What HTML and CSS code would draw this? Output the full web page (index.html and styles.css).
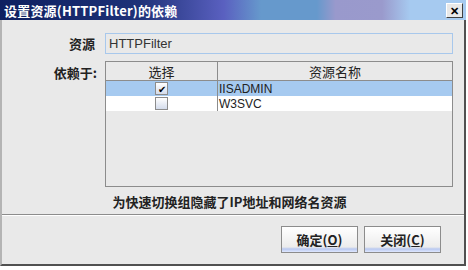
FILE: index.html
```html
<!DOCTYPE html>
<html>
<head>
    <title>设置资源的依赖</title>
    <meta charset="utf-8">
    <link rel="stylesheet" href="styles.css">
</head>
<body>
<div class="dialog">
    <div class="titlebar">
        <span class="title">设置资源(HTTPFilter)的依赖</span>
        <span class="close-btn">✕</span>
    </div>
    <div class="content">
        <div class="form-row">
            <span class="label">资源</span>
            <div class="field">HTTPFilter</div>
        </div>
        <div class="form-row top">
            <span class="label dep">依赖于:</span>
            <div class="table">
                <div class="row head">
                    <div class="cell c1">选择</div>
                    <div class="cell c2">资源名称</div>
                </div>
                <div class="row selected">
                    <div class="cell c1"><span class="check on">✔</span></div>
                    <div class="cell c2 name">IISADMIN</div>
                </div>
                <div class="row">
                    <div class="cell c1"><span class="check"></span></div>
                    <div class="cell c2 name">W3SVC</div>
                </div>
            </div>
        </div>
        <p class="note">为快速切换组隐藏了IP地址和网络名资源</p>
    </div>
    <div class="buttons">
        <button>确定(<u>O</u>)</button>
        <button>关闭(<u>C</u>)</button>
    </div>
</div>
</body>
</html>
```
FILE: styles.css
```css
body {
    margin: 0;
    background: #ffffff;
    font-family: "Noto Sans CJK SC", "Liberation Sans", sans-serif;
    font-size: 12px;
    color: #222;
}

.dialog {
    box-sizing: border-box;
    width: 466px;
    height: 266px;
    background: #e9e9e9;
    border-left: 2px solid #b4b4b4;
    border-right: 2px solid #505050;
    border-bottom: 2px solid #505050;
    display: flex;
    flex-direction: column;
}

.titlebar {
    height: 20px;
    margin-left: -2px;
    margin-right: -2px;
    display: flex;
    align-items: center;
    justify-content: space-between;
    padding: 0 3px 0 4px;
    background: linear-gradient(to right, #0e1f60 0%, #1e3278 30%, #5a60c0 48%, #6699cc 56%, #6699cc 68%, #9999cc 72%, #9a9acc 82%, #a6caf0 88%, #a6caf0 100%);
}

.title {
    color: #fff;
    font-weight: bold;
    font-size: 13px;
    letter-spacing: 0.2px;
}

.close-btn {
    width: 15px;
    height: 13px;
    background: #e8e8e8;
    border: 1px solid #fff;
    border-right-color: #404040;
    border-bottom-color: #404040;
    font-size: 11px;
    font-weight: bold;
    line-height: 13px;
    text-align: center;
    color: #000;
}

.content {
    padding: 13px 11px 0 0;
    border-bottom: 1px solid #8c8c8c;
    box-shadow: 0 1px 0 #ffffff;
}

.form-row {
    display: flex;
    align-items: center;
    gap: 10px;
}

.form-row.top {
    align-items: flex-start;
    margin-top: 7px;
}

.label {
    width: 93px;
    text-align: right;
    font-weight: bold;
    font-size: 13px;
}

.label.dep {
    width: 95px;
    margin-right: -2px;
    margin-top: 2px;
}

.field {
    flex: 1;
    height: 19px;
    border: 1px solid #a8c8ec;
    padding-left: 3px;
    font-family: "Liberation Sans", sans-serif;
    font-size: 13px;
    line-height: 19px;
    color: #333;
}

.table {
    flex: 1;
    height: 124px;
    border: 1px solid #8c8c8c;
}

.row {
    display: flex;
    height: 15px;
    background: #fff;
}

.row.head {
    height: 18px;
    background: #e9e9e9;
    border-bottom: 1px solid #8c8c8c;
}

.row.selected {
    background: #a6caf0;
}

.cell {
    display: flex;
    align-items: center;
    justify-content: center;
}

.c1 {
    width: 111px;
    border-right: 1px solid #8c8c8c;
}

.c2 {
    flex: 1;
}

.head .cell {
    font-size: 13px;
}

.name {
    justify-content: flex-start;
    padding-left: 1px;
    font-family: "Liberation Sans", sans-serif;
    font-size: 12px;
}

.check {
    box-sizing: border-box;
    width: 13px;
    height: 13px;
    border: 1px solid #8c8c8c;
    background: linear-gradient(#ffffff, #d4dcec);
    font-size: 10px;
    line-height: 11px;
    text-align: center;
    color: #000;
}

.note {
    margin: 5px 0 3px;
    text-align: center;
    font-weight: bold;
    font-size: 13px;
    padding-left: 4px;
}

.buttons {
    display: flex;
    justify-content: flex-end;
    gap: 6px;
    padding: 11px 23px 0 0;
}

button {
    box-sizing: border-box;
    width: 77px;
    height: 27px;
    border: 1px solid #8c8c8c;
    background: linear-gradient(#ffffff 0%, #ececec 80%, #b8c8f0 88%, #e0e8ff 100%);
    font-family: "Noto Sans CJK SC", sans-serif;
    font-size: 13px;
    font-weight: bold;
    color: #222;
    padding: 0;
}
```
